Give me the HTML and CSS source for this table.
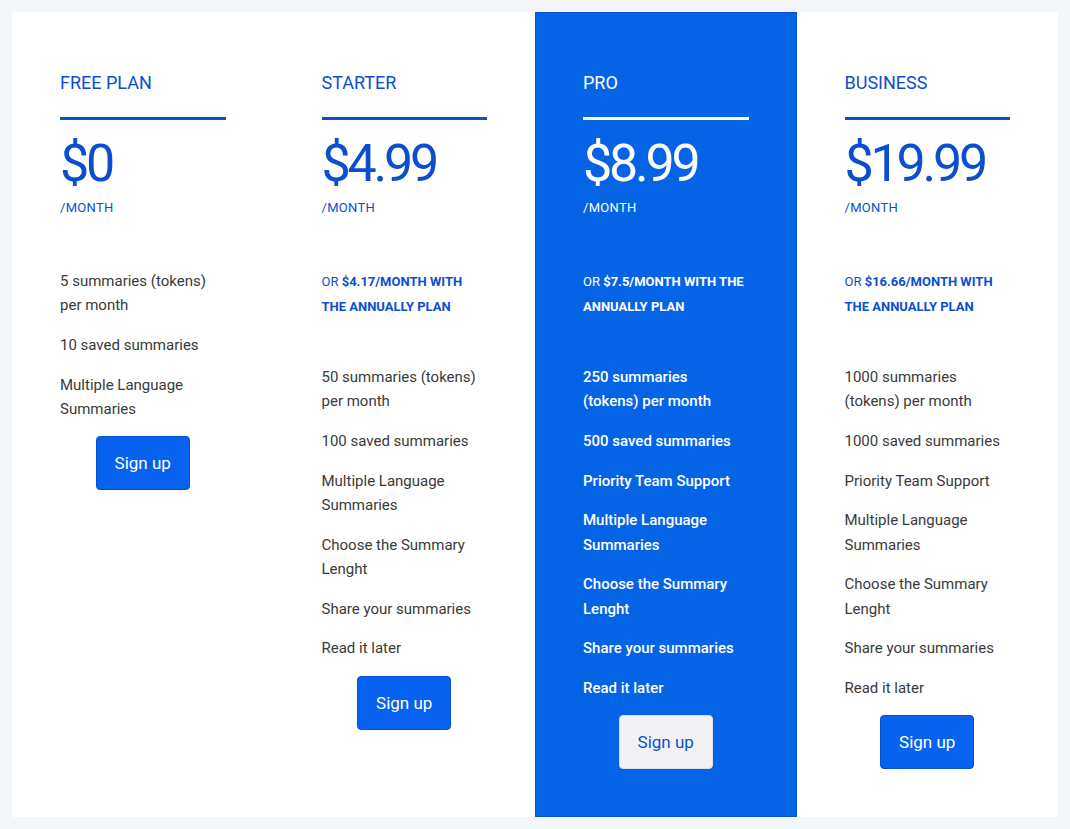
FILE: index.html
```html
<!DOCTYPE html>
<html lang="en">
<head>
<meta charset="utf-8">
<title>Pricing</title>
<link rel="stylesheet" href="styles.css">
</head>
<body>
<main class="pricing">
  <section class="plan">
    <h2 class="plan-name">FREE PLAN</h2>
    <div class="rule"></div>
    <div class="price">$0</div>
    <div class="period">/MONTH</div>
    <ul class="features">
      <li>5 summaries (tokens)<br>per month</li>
      <li>10 saved summaries</li>
      <li>Multiple Language<br>Summaries</li>
    </ul>
    <div class="cta"><button class="btn">Sign up</button></div>
  </section>
  <section class="plan">
    <h2 class="plan-name">STARTER</h2>
    <div class="rule"></div>
    <div class="price">$4.99</div>
    <div class="period">/MONTH</div>
    <p class="annual">OR <b>$4.17/MONTH WITH<br>THE ANNUALLY PLAN</b></p>
    <ul class="features">
      <li>50 summaries (tokens)<br>per month</li>
      <li>100 saved summaries</li>
      <li>Multiple Language<br>Summaries</li>
      <li>Choose the Summary<br>Lenght</li>
      <li>Share your summaries</li>
      <li>Read it later</li>
    </ul>
    <div class="cta"><button class="btn">Sign up</button></div>
  </section>
  <section class="plan plan-featured">
    <h2 class="plan-name">PRO</h2>
    <div class="rule"></div>
    <div class="price">$8.99</div>
    <div class="period">/MONTH</div>
    <p class="annual">OR <b>$7.5/MONTH WITH THE<br>ANNUALLY PLAN</b></p>
    <ul class="features">
      <li>250 summaries<br>(tokens) per month</li>
      <li>500 saved summaries</li>
      <li>Priority Team Support</li>
      <li>Multiple Language<br>Summaries</li>
      <li>Choose the Summary<br>Lenght</li>
      <li>Share your summaries</li>
      <li>Read it later</li>
    </ul>
    <div class="cta"><button class="btn">Sign up</button></div>
  </section>
  <section class="plan">
    <h2 class="plan-name">BUSINESS</h2>
    <div class="rule"></div>
    <div class="price">$19.99</div>
    <div class="period">/MONTH</div>
    <p class="annual">OR <b>$16.66/MONTH WITH<br>THE ANNUALLY PLAN</b></p>
    <ul class="features">
      <li>1000 summaries<br>(tokens) per month</li>
      <li>1000 saved summaries</li>
      <li>Priority Team Support</li>
      <li>Multiple Language<br>Summaries</li>
      <li>Choose the Summary<br>Lenght</li>
      <li>Share your summaries</li>
      <li>Read it later</li>
    </ul>
    <div class="cta"><button class="btn">Sign up</button></div>
  </section>
</main>
</body>
</html>
```

FILE: styles.css
```css
* { box-sizing: border-box; }
html, body { margin: 0; padding: 0; }
body {
  background: #f3f6fb;
  padding: 12px;
  font-family: Roboto, "Liberation Sans", sans-serif;
  color: #3a3a3a;
}
.pricing {
  width: 1046px;
  height: 805px;
  background: #ffffff;
  display: grid;
  grid-template-columns: repeat(4, 1fr);
}
.plan {
  padding: 59px 48px 47px;
  display: flex;
  flex-direction: column;
}
.plan-featured {
  background: #0563e6;
  border: 1px solid #0652d2;
  padding: 58px 47px 46px;
}
.plan-name {
  margin: 0;
  font-size: 18px;
  line-height: 24px;
  font-weight: 400;
  color: #0b4fd0;
}
.rule {
  height: 3px;
  background: #0b4fd0;
  margin-top: 22px;
}
.price {
  margin-top: 18px;
  font-size: 52px;
  line-height: 52px;
  font-weight: 400;
  letter-spacing: -3.2px;
  color: #0b4fd0;
}
.period {
  margin-top: 8px;
  font-size: 13px;
  line-height: 20px;
  letter-spacing: 0.3px;
  color: #0b4fd0;
}
.annual {
  margin: 51px 0 0;
  font-size: 13px;
  line-height: 25px;
  color: #0b4fd0;
}
.annual b { font-weight: 700; }
.annual + .features { margin-top: 46px; }
.features {
  list-style: none;
  margin: 51px 0 0;
  padding: 0;
  display: flex;
  flex-direction: column;
  gap: 15.4px;
  font-size: 15px;
  line-height: 24.3px;
}
.cta {
  display: flex;
  justify-content: center;
  margin-top: 15px;
}
.btn {
  font-family: inherit;
  font-size: 17px;
  line-height: 20px;
  height: 54px;
  padding: 0 18px;
  min-width: 93px;
  background: #0762ef;
  color: #ffffff;
  border: 1px solid #0a4fcf;
  border-radius: 4px;
}
.plan-featured .plan-name,
.plan-featured .price,
.plan-featured .period,
.plan-featured .annual,
.plan-featured .features { color: #ffffff; }
.plan-featured .rule { background: #ffffff; }
.plan-featured .features { font-weight: 500; }
.plan-featured .btn {
  background: #f2f2f4;
  color: #0b4fd0;
  border-color: #d9dde5;
}
```
